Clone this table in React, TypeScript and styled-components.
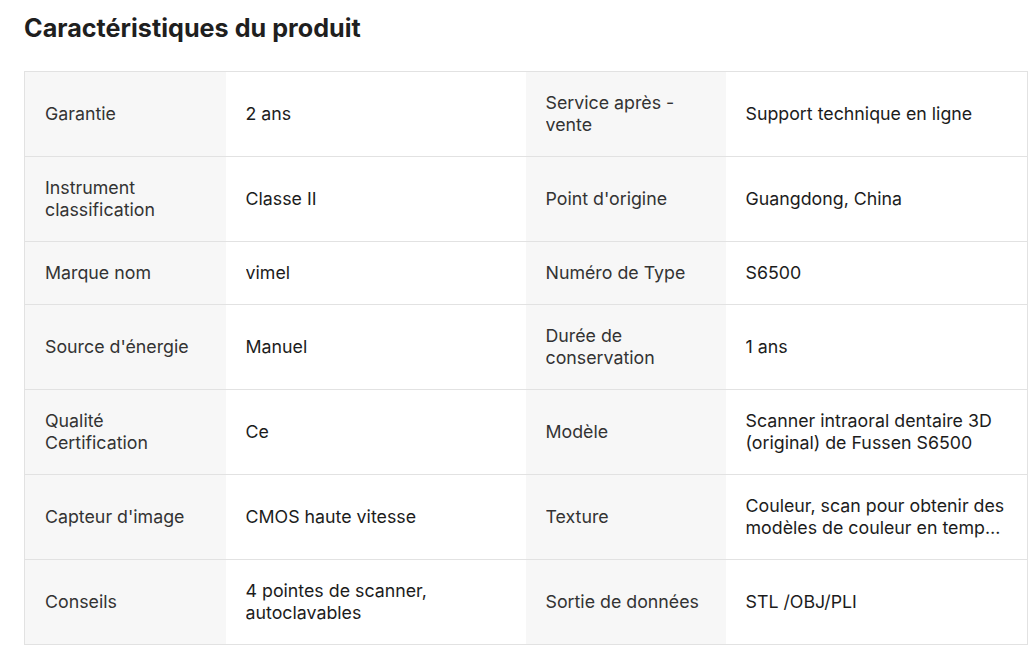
import React from "react";
import styled, { createGlobalStyle } from "styled-components";

const GlobalStyle = createGlobalStyle`
  html, body { margin: 0; padding: 0; background: #ffffff; }
  body { font-family: Inter, "Noto Sans", Arial, sans-serif; color: #222; }
`;

const Page = styled.div`
  padding: 12px 5px 0 24px;
`;

const Title = styled.h2`
  margin: 0 0 27px 0;
  font-size: 25.2px;
  line-height: 32px;
  font-weight: 700;
  color: #1f1f1f;
`;

const Table = styled.table`
  width: 1003px;
  border-collapse: collapse;
  table-layout: fixed;
  border: 1px solid #e2e2e2;
`;

const Col = styled.col<{ $w: number }>`
  width: ${(p) => p.$w}px;
`;

const Row = styled.tr`
  border-bottom: 1px solid #e2e2e2;
`;

const Cell = styled.td<{ $label?: boolean }>`
  padding: 20px 20px;
  font-size: 17.8px;
  line-height: 22px;
  vertical-align: middle;
  background: ${(p) => (p.$label ? "#f7f7f7" : "#ffffff")};
  color: ${(p) => (p.$label ? "#333333" : "#1c1c1c")};
  font-weight: 400;
`;

const Clamp = styled.div`
  display: -webkit-box;
  -webkit-line-clamp: 2;
  -webkit-box-orient: vertical;
  overflow: hidden;
`;

const rows: [string, string, string, string][] = [
  ["Garantie", "2 ans", "Service après - vente", "Support technique en ligne"],
  ["Instrument classification", "Classe II", "Point d'origine", "Guangdong, China"],
  ["Marque nom", "vimel", "Numéro de Type", "S6500"],
  ["Source d'énergie", "Manuel", "Durée de conservation", "1 ans"],
  ["Qualité Certification", "Ce", "Modèle", "Scanner intraoral dentaire 3D (original) de Fussen S6500"],
  ["Capteur d'image", "CMOS haute vitesse", "Texture", "Couleur, scan pour obtenir des modèles de couleur en temps réel"],
  ["Conseils", "4 pointes de scanner, autoclavables", "Sortie de données", "STL /OBJ/PLI"],
];

export default function App() {
  return (
    <Page>
      <GlobalStyle />
      <Title>Caractéristiques du produit</Title>
      <Table>
        <colgroup>
          <Col $w={201} />
          <Col $w={300} />
          <Col $w={200} />
          <Col $w={302} />
        </colgroup>
        <tbody>
          {rows.map((r, i) => (
            <Row key={i}>
              <Cell $label>
                <Clamp>{r[0]}</Clamp>
              </Cell>
              <Cell>
                <Clamp>{r[1]}</Clamp>
              </Cell>
              <Cell $label>
                <Clamp>{r[2]}</Clamp>
              </Cell>
              <Cell>
                <Clamp>{r[3]}</Clamp>
              </Cell>
            </Row>
          ))}
        </tbody>
      </Table>
    </Page>
  );
}
